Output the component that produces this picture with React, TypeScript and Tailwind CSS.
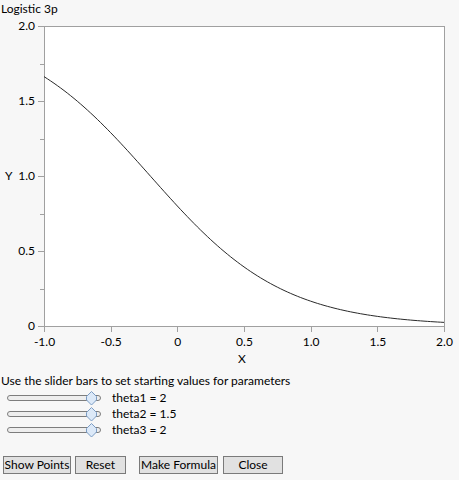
import React from 'react';

const theta1 = 2;
const theta2 = 1.5;
const theta3 = 2;

// plot frame in page coords
const X0 = 44;
const X1 = 444;
const Y0 = 26;
const Y1 = 326;

const px = (x: number) => X0 + ((x + 1) / 3) * (X1 - X0);
const py = (y: number) => Y1 - (y / 2) * (Y1 - Y0);

const curve = () => {
  const pts: string[] = [];
  for (let i = 0; i <= 120; i++) {
    const x = -1 + (3 * i) / 120;
    const y = theta3 / (1 + theta2 * Math.exp(theta1 * x));
    pts.push(`${px(x).toFixed(2)},${py(y).toFixed(2)}`);
  }
  return pts.join(' ');
};

const xTicks = [
  { v: -1, t: '-1.0' },
  { v: -0.5, t: '-0.5' },
  { v: 0, t: '0' },
  { v: 0.5, t: '0.5' },
  { v: 1, t: '1.0' },
  { v: 1.5, t: '1.5' },
  { v: 2, t: '2.0' },
];
const yTicks = [
  { v: 2, t: '2.0' },
  { v: 1.5, t: '1.5' },
  { v: 1, t: '1.0' },
  { v: 0.5, t: '0.5' },
  { v: 0, t: '0' },
];
const yMinor = [0.25, 0.75, 1.25, 1.75];

const Slider = ({ label }: { label: string }) => (
  <div className="flex h-[16px] items-center">
    <div className="relative ml-[7px] h-[6px] w-[94px] rounded-full border border-[#7d7d7d] bg-[#eeeeee]">
      <svg
        className="absolute left-[78px] top-[-5px]"
        width="11"
        height="15"
        viewBox="0 0 11 15"
      >
        <polygon
          points="5.5,0.5 10.5,5.5 10.5,9 5.5,14 0.5,9 0.5,5.5"
          fill="#dce9f8"
          stroke="#7b9cc4"
          strokeWidth="1"
          strokeLinejoin="round"
        />
      </svg>
    </div>
    <span className="ml-[11px] leading-none">{label}</span>
  </div>
);

const Button = ({ children, className }: { children: React.ReactNode; className: string }) => (
  <button
    className={`h-[18px] whitespace-nowrap border border-[#7a7a7a] bg-[#e1e1e1] text-[12px] leading-none text-black ${className}`}
  >
    {children}
  </button>
);

export default function App() {
  return (
    <div className="flex h-[480px] w-[459px] flex-col bg-[#f7f7f7] font-['Lato',sans-serif] text-[12px] text-black">
      <div className="flex h-[18px] items-center pl-[1px]">Logistic 3p</div>

      <svg width="459" height="354" viewBox="0 18 459 354" className="block">
        <rect x={X0 + 0.5} y={Y0 + 0.5} width={X1 - X0} height={Y1 - Y0} fill="#ffffff" stroke="#a0a0a0" />
        {yTicks.map((t) => (
          <g key={t.t}>
            <line x1={38} x2={X0} y1={py(t.v) + 0.5} y2={py(t.v) + 0.5} stroke="#a0a0a0" />
            <text x={35} y={py(t.v) + 4} textAnchor="end" fontSize="12">
              {t.t}
            </text>
          </g>
        ))}
        {yMinor.map((v) => (
          <line key={v} x1={40} x2={X0} y1={Math.round(py(v)) + 0.5} y2={Math.round(py(v)) + 0.5} stroke="#a0a0a0" />
        ))}
        {xTicks.map((t) => (
          <g key={t.t}>
            <line x1={Math.round(px(t.v)) + 0.5} x2={Math.round(px(t.v)) + 0.5} y1={Y1} y2={332} stroke="#a0a0a0" />
            <text x={px(t.v) + 0.5} y={346} textAnchor="middle" fontSize="12">
              {t.t}
            </text>
          </g>
        ))}
        <text x={5} y={180} fontSize="12">
          Y
        </text>
        <text x={242} y={363} textAnchor="middle" fontSize="12">
          X
        </text>
        <polyline points={curve()} fill="none" stroke="#2a2a2a" strokeWidth="1" />
      </svg>

      <div className="flex h-[18px] items-center pl-[1px]">
        Use the slider bars to set starting values for parameters
      </div>
      <Slider label="theta1 = 2" />
      <Slider label="theta2 = 1.5" />
      <Slider label="theta3 = 2" />

      <div className="mt-[18px] flex">
        <Button className="ml-[3px] w-[68px]">Show Points</Button>
        <Button className="ml-[4px] w-[51px]">Reset</Button>
        <Button className="ml-[13px] w-[79px]">Make Formula</Button>
        <Button className="ml-[5px] w-[60px]">Close</Button>
      </div>
    </div>
  );
}
